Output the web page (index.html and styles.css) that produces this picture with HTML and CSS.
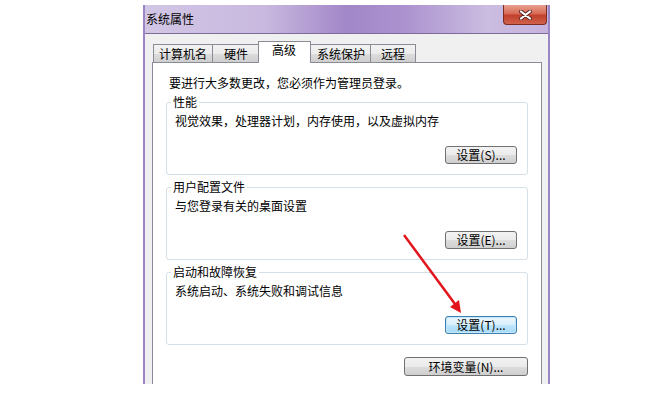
FILE: index.html
```html
<!DOCTYPE html>
<html lang="zh-CN">
<head>
    <meta charset="utf-8">
    <title>系统属性</title>
    <link rel="stylesheet" href="styles.css">
</head>
<body>

    <div class="window">
        <div class="titlebar">
            <span class="title">系统属性</span>
            <span class="close-btn">
                <svg width="13" height="10" viewBox="0 0 13 10">
                    <path d="M2 1.5 L11 8.5 M11 1.5 L2 8.5" stroke="#5a2a26" stroke-width="4" stroke-linecap="round"/>
                    <path d="M2 1.5 L11 8.5 M11 1.5 L2 8.5" stroke="#fff" stroke-width="2.2" stroke-linecap="round"/>
                </svg>
            </span>
        </div>

        <div class="client">
            <div class="tabs">
                <span class="tab">计算机名</span>
                <span class="tab tab-hw">硬件</span>
                <span class="tab tab-active">高级</span>
                <span class="tab tab-sys">系统保护</span>
                <span class="tab tab-short">远程</span>
            </div>

            <div class="panel">
                <p class="note">要进行大多数更改，您必须作为管理员登录。</p>

                <fieldset class="group">
                    <legend>性能</legend>
                    <p class="desc">视觉效果，处理器计划，内存使用，以及虚拟内存</p>
                    <div class="actions">
                        <button class="btn">设置(S)...</button>
                    </div>
                </fieldset>

                <fieldset class="group">
                    <legend>用户配置文件</legend>
                    <p class="desc">与您登录有关的桌面设置</p>
                    <div class="actions">
                        <button class="btn">设置(E)...</button>
                    </div>
                </fieldset>

                <fieldset class="group">
                    <legend>启动和故障恢复</legend>
                    <p class="desc">系统启动、系统失败和调试信息</p>
                    <div class="actions">
                        <button class="btn btn-focus">设置(T)...</button>
                    </div>
                </fieldset>

                <div class="actions env">
                    <button class="btn btn-wide">环境变量(N)...</button>
                </div>
            </div>
        </div>
    </div>

    <!-- red annotation arrow drawn over the dialog -->
    <svg class="arrow" width="670" height="397" viewBox="0 0 670 397">
        <line x1="404" y1="235" x2="455" y2="304" stroke="#e3151c" stroke-width="2.5"/>
        <polygon points="461,313 450,307 459,300" fill="#e3151c"/>
    </svg>

</body>
</html>
```

FILE: styles.css
```css
* {
    box-sizing: border-box;
}
html, body {
    margin: 0;
    padding: 0;
}
body {
    background: #fff;
    width: 670px;
    height: 397px;
    overflow: hidden;
    position: relative;
    font-family: "Noto Sans CJK SC", "Noto Sans", sans-serif;
    font-size: 12px;
    line-height: 14px;
    color: #000;
}
.window {
    margin: 5px 0 0 143px;
    width: 407px;
    height: 379px;
    overflow: hidden;
    border-left: 2px solid #9a86c4;
    border-right: 2px solid #9a86c4;
    background: #f0f0f0;
}
.titlebar {
    display: flex;
    justify-content: space-between;
    align-items: flex-start;
    height: 28px;
    background: linear-gradient(90deg, #d2c6e5 0%, #c8b8df 30%, #a287c8 50%, #ab92cf 64%, #cbbce1 85%, #c5b3de 100%);
}
.title {
    padding-left: 1px;
    line-height: 28px;
    font-size: 12px;
}
.close-btn {
    display: flex;
    align-items: center;
    justify-content: center;
    width: 44px;
    height: 20px;
    margin-right: 1px;
    border: 1px solid #7a2d24;
    border-top: 0;
    border-radius: 0 0 4px 4px;
    background: linear-gradient(#e8a190 0%, #d86a56 45%, #c2402c 55%, #d0624c 100%);
}
.client {
    border-top: 1px solid #7d6c99;
    padding: 7px 6px 0 7px;
}
.tabs {
    display: flex;
    align-items: flex-end;
    padding-left: 1px;
    margin-bottom: -1px;
    position: relative;
    z-index: 1;
}
.tab {
    height: 18px;
    margin-right: -1px;
    margin-bottom: 1px;
    padding: 0 5px;
    border: 1px solid #898c95;
    border-bottom: 0;
    background: linear-gradient(#f2f2f2 0%, #ebebeb 50%, #dddddd 51%, #cfcfcf 100%);
    line-height: 17px;
    white-space: nowrap;
}
.tab-hw {
    padding: 0 10px 0 11px;
}
.tab-sys {
    padding: 0 5px 0 6px;
}
.tab-short {
    padding: 0 10px;
}
.tab-active {
    height: 22px;
    margin-bottom: 0;
    padding: 1px 14px 0 13px;
    background: #fff;
    line-height: 13px;
}
.panel {
    height: 400px;
    padding-top: 13px;
    border: 1px solid #898c95;
    background: #fff;
}
.note {
    margin: 0 0 0 16px;
}
.group {
    margin: 5px 13px 0;
    padding: 5px 10px 10px 8px;
    border: 1px solid #d5dfe5;
    border-radius: 3px;
}
.group legend {
    margin-left: -4px;
    padding: 0 2px;
    line-height: 14px;
}
.desc {
    margin: 0;
}
.actions {
    display: flex;
    justify-content: flex-end;
    margin-top: 18px;
}
.btn {
    width: 72px;
    height: 18px;
    padding: 0;
    border: 1px solid #707070;
    border-radius: 3px;
    background: linear-gradient(#f2f2f2 0%, #ebebeb 50%, #dddddd 51%, #cfcfcf 100%);
    font-family: "Noto Sans CJK SC", "Noto Sans", sans-serif;
    font-size: 12px;
    line-height: 16px;
    color: #000;
}
.btn-focus {
    border-color: #3c7fb1;
    box-shadow: inset 0 0 0 1px #c5e6f8;
    background: linear-gradient(#eaf6fd 0%, #d9f0fc 50%, #bee6fd 51%, #a7d9f5 100%);
}
.btn-wide {
    width: 124px;
    height: 19px;
}
.env {
    margin: 12px 13px 0 0;
}
.arrow {
    position: absolute;
    left: 0;
    top: 0;
    pointer-events: none;
}
```
